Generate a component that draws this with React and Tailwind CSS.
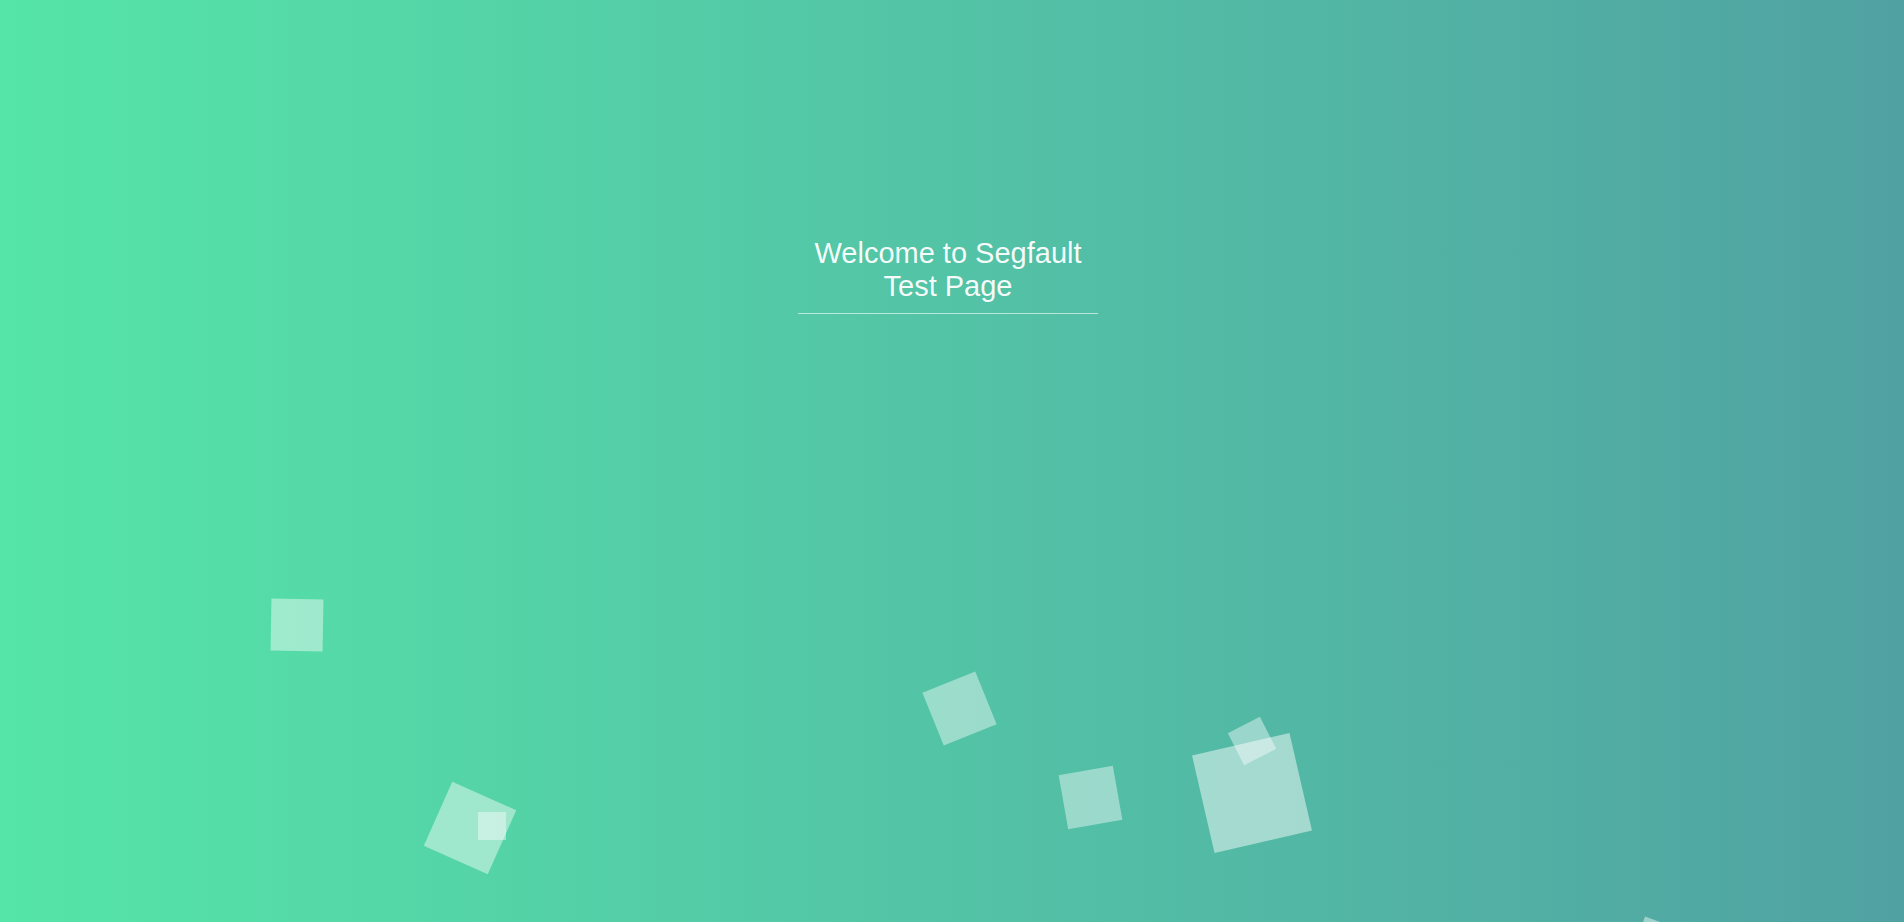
const squares = [
    { left: 270.5, top: 598.5, size: 52, rotate: 1, opacity: 0.44 },
    { left: 434.5, top: 793, size: 70, rotate: 24, opacity: 0.44 },
    { left: 477.5, top: 812, size: 28, rotate: 0, opacity: 0.42 },
    { left: 930.5, top: 679.5, size: 57, rotate: -22, opacity: 0.42 },
    { left: 1062.5, top: 769.5, size: 55, rotate: -10, opacity: 0.42 },
    { left: 1202, top: 743, size: 100, rotate: -13, opacity: 0.48 },
    { left: 1234, top: 723, size: 36, rotate: -27, opacity: 0.42 },
    { left: 1633, top: 925, size: 60, rotate: 20, opacity: 0.45 },
];

const App = () => {
    return (
        <div className="relative h-[922px] w-full overflow-hidden bg-gradient-to-r from-[#55e5a8] to-[#50a2a2] font-['Liberation_Sans',Arial,sans-serif]">
            <div className="relative z-10 flex justify-center pr-[8px] pt-[237px]">
                <h1 className="w-[300px] border-b border-white/60 pb-[10px] text-center text-[29px] font-normal leading-[33px] text-white/95">
                    Welcome to Segfault Test Page
                </h1>
            </div>

            {/* floating squares */}
            {squares.map((sq, index) => (
                <div
                    key={index}
                    className="absolute bg-white"
                    style={{
                        left: sq.left,
                        top: sq.top,
                        width: sq.size,
                        height: sq.size,
                        opacity: sq.opacity,
                        transform: `rotate(${sq.rotate}deg)`,
                    }}
                />
            ))}
        </div>
    );
};

export default App;
